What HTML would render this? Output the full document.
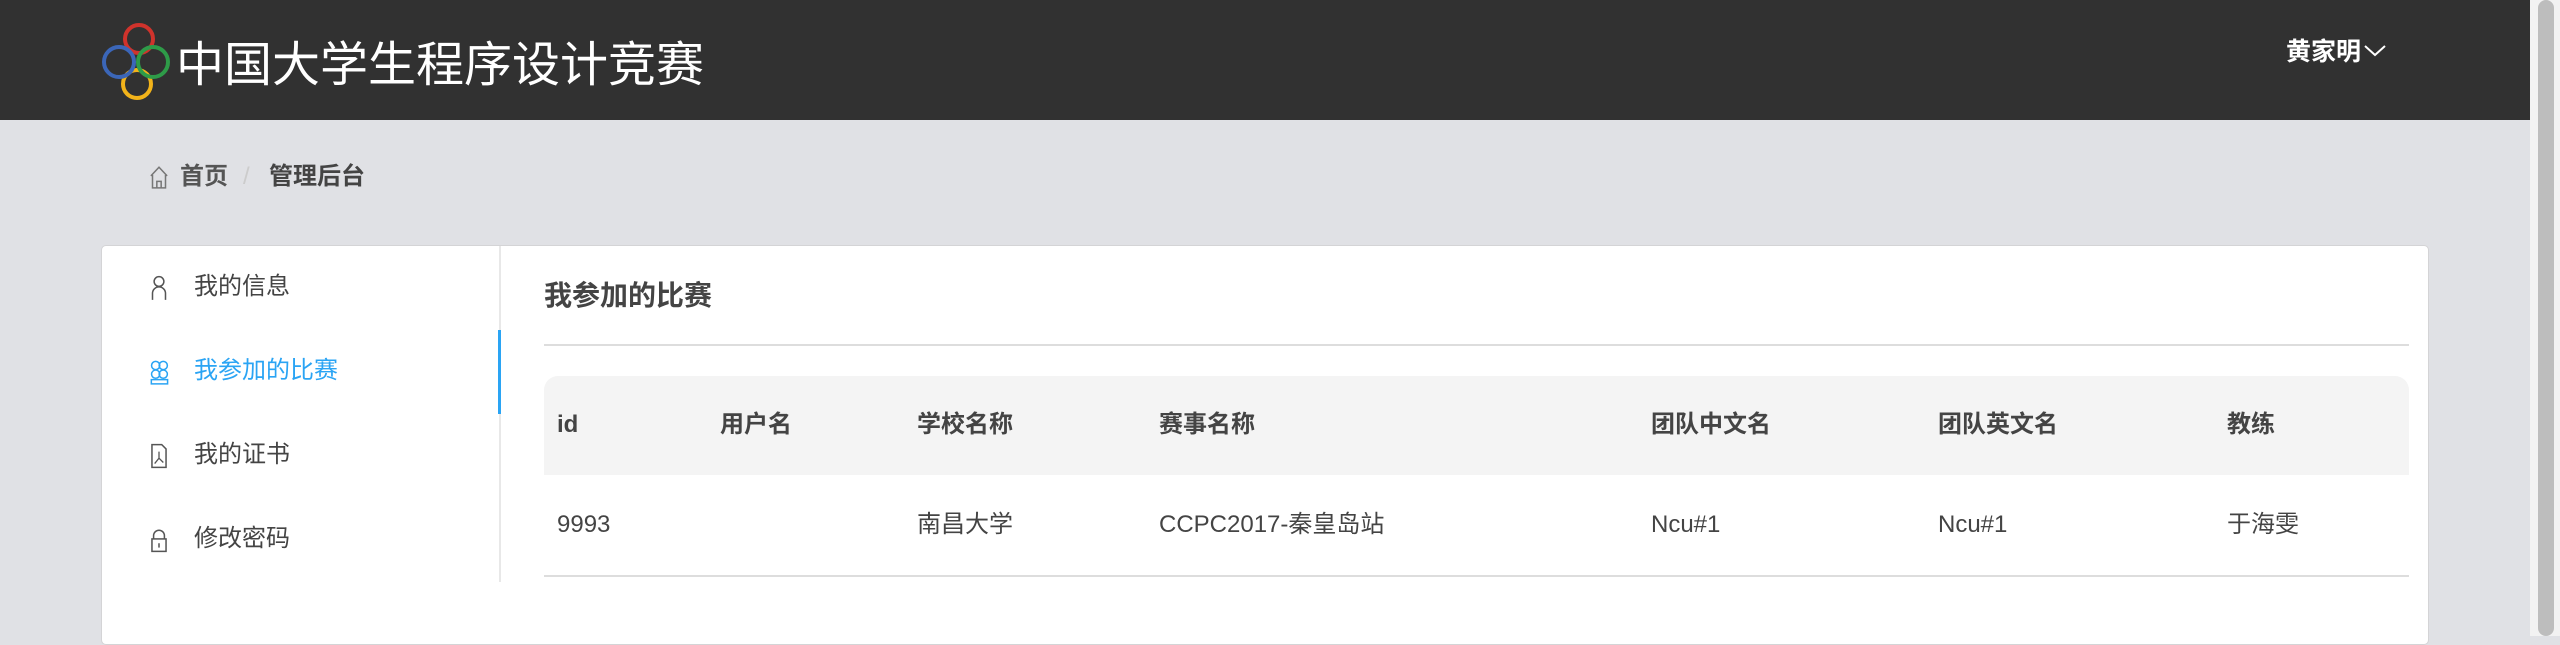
<!DOCTYPE html>
<html><head><meta charset="utf-8"><style>
*{margin:0;padding:0;box-sizing:border-box}
body{width:2560px;height:636px;overflow:hidden;background:#e0e1e5;font-family:"Liberation Sans","Noto Sans CJK SC",sans-serif;position:relative;color:#444}
.hdr{position:absolute;left:0;top:0;width:2530px;height:120px;background:#313131}
.title{position:absolute;left:176px;top:36px;font-size:48px;color:#fff;line-height:60px}
.user{position:absolute;left:2286px;top:37px;font-size:25px;color:#fff;font-weight:bold;line-height:30px}
.sb{position:absolute;left:2530px;top:0;width:30px;height:636px;background:#f2f2f2}
.sb div{position:absolute;left:8px;top:0;width:16px;height:636px;background:#bdbdbd;border-radius:8px}
.bc{position:absolute;top:162px;font-size:24px;line-height:30px;font-weight:bold}
.panel{position:absolute;left:101px;top:245px;width:2328px;height:400px;background:#fff;border:1px solid #d4d4d6;border-radius:5px}
.side{position:absolute;left:499px;top:246px;width:2px;height:336px;background:#e8e8e8}
.act{position:absolute;left:498px;top:330px;width:3px;height:84px;background:#2aa4f4}
.mi{position:absolute;left:194px;font-size:24px;line-height:30px;color:#444}
.ic{position:absolute;left:150px}
.h2{position:absolute;left:544px;top:280px;font-size:28px;font-weight:bold;line-height:32px;color:#444}
.line{position:absolute;left:544px;width:1865px;height:2px;background:#ddd}
.th{position:absolute;left:544px;top:376px;width:1865px;height:99px;background:#f4f4f4;border-radius:14px 14px 0 0}
.c{position:absolute;font-size:24px;line-height:30px;color:#444}
.b{font-weight:bold}
</style></head><body>
<div class="hdr"></div>
<svg style="position:absolute;left:101px;top:22px" width="72" height="80" viewBox="0 0 72 80">
<circle cx="38" cy="17" r="14" fill="none" stroke="#d0332c" stroke-width="4"/>
<circle cx="36" cy="62" r="14" fill="none" stroke="#f2b31a" stroke-width="4"/>
<circle cx="18" cy="40" r="15" fill="none" stroke="#3b66b8" stroke-width="4"/>
<circle cx="52" cy="40" r="15" fill="none" stroke="#2e9b48" stroke-width="4"/>
</svg>
<div class="title">中国大学生程序设计竞赛</div>
<div class="user">黄家明<svg width="24" height="20" viewBox="0 0 24 20" style="margin-left:2px"><path d="M2 6l10 9 10-9" fill="none" stroke="#fff" stroke-width="2"/></svg></div>
<div class="sb"><div></div></div>
<svg style="position:absolute;left:149px;top:164px" width="20" height="26" viewBox="0 0 18 24"><path d="M1.5 11L9 3l7.5 8M3 10v12h12V10M7 22v-6h4v6" fill="none" stroke="#777" stroke-width="1.4"/></svg>
<div class="bc" style="left:180px;color:#555">首页</div>
<div class="bc" style="left:243px;color:#ccc;font-weight:normal">/</div>
<div class="bc" style="left:269px;color:#444">管理后台</div>
<div class="panel"></div>
<div class="side"></div><div class="act"></div>
<svg class="ic" style="top:275px" width="18" height="26" viewBox="0 0 16 24"><circle cx="8" cy="6" r="4.5" fill="none" stroke="#555" stroke-width="1.4"/><path d="M2 23v-6a6 6 0 0 1 12 0v6" fill="none" stroke="#555" stroke-width="1.4"/></svg>
<div class="mi" style="top:272px">我的信息</div>
<svg class="ic" style="top:359px" width="20" height="26" viewBox="0 0 18 24"><circle cx="5" cy="6" r="3.8" fill="none" stroke="#2aa4f4" stroke-width="1.4"/><circle cx="12" cy="6" r="3.8" fill="none" stroke="#2aa4f4" stroke-width="1.4"/><circle cx="5" cy="14" r="3.8" fill="none" stroke="#2aa4f4" stroke-width="1.4"/><circle cx="12" cy="14" r="3.8" fill="none" stroke="#2aa4f4" stroke-width="1.4"/><path d="M1 23v-4h15v4z" fill="none" stroke="#2aa4f4" stroke-width="1.4"/></svg>
<div class="mi" style="top:356px;color:#2aa4f4">我参加的比赛</div>
<svg class="ic" style="top:443px" width="18" height="26" viewBox="0 0 16 24"><path d="M1.5 1.5h9l4 4v17h-13z" fill="none" stroke="#555" stroke-width="1.4"/><path d="M8 8v6l-4 5M8 14l4 4" fill="none" stroke="#555" stroke-width="1.2"/></svg>
<div class="mi" style="top:440px">我的证书</div>
<svg class="ic" style="top:527px" width="18" height="26" viewBox="0 0 16 24"><path d="M3 11V8a5 5 0 0 1 10 0v3" fill="none" stroke="#555" stroke-width="1.4"/><rect x="1.5" y="11" width="13" height="11.5" fill="none" stroke="#555" stroke-width="1.4"/><path d="M8 15v4" stroke="#555" stroke-width="1.4"/></svg>
<div class="mi" style="top:524px">修改密码</div>
<div class="h2">我参加的比赛</div>
<div class="line" style="top:344px"></div>
<div class="th"></div>
<div class="c b" style="left:557px;top:410px">id</div>
<div class="c b" style="left:720px;top:410px">用户名</div>
<div class="c b" style="left:917px;top:410px">学校名称</div>
<div class="c b" style="left:1159px;top:410px">赛事名称</div>
<div class="c b" style="left:1651px;top:410px">团队中文名</div>
<div class="c b" style="left:1938px;top:410px">团队英文名</div>
<div class="c b" style="left:2227px;top:410px">教练</div>
<div class="c" style="left:557px;top:510px">9993</div>
<div class="c" style="left:917px;top:510px">南昌大学</div>
<div class="c" style="left:1159px;top:510px">CCPC2017-秦皇岛站</div>
<div class="c" style="left:1651px;top:510px">Ncu#1</div>
<div class="c" style="left:1938px;top:510px">Ncu#1</div>
<div class="c" style="left:2227px;top:510px">于海雯</div>
<div class="line" style="top:575px"></div>
</body></html>
